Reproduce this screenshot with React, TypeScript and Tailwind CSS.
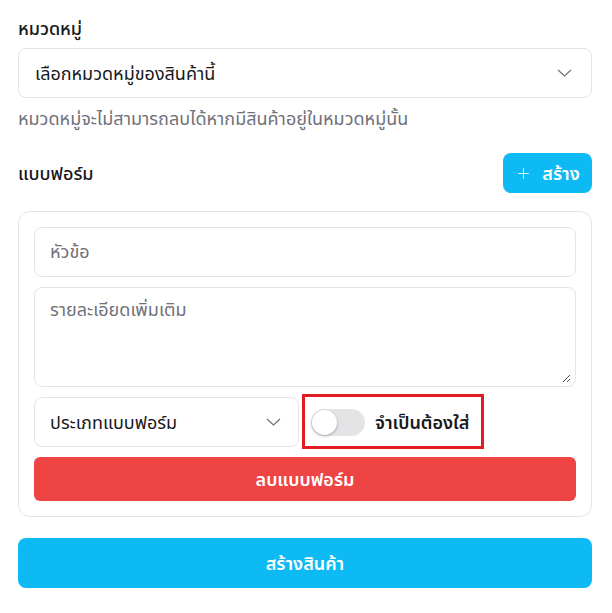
import { Plus } from "lucide-react"

function Chevron() {
  return (
    <svg width="15" height="8" viewBox="0 0 15 8" fill="none">
      <path d="M1 1 L7.5 7 L14 1" stroke="#71717a" strokeWidth="1.2" />
    </svg>
  )
}

export default function App() {
  return (
    <div className="bg-white min-h-screen pl-[18px] pr-[20px] pt-[14px] text-[#18181b]" style={{ fontFamily: '"Noto Sans", "Noto Sans Thai", sans-serif' }}>
      {/* category */}
      <div className="text-[18px] font-medium leading-[28px]">หมวดหมู่</div>
      <div className="mt-[6px] h-[50px] rounded-lg border border-[#e4e4e7] flex items-center justify-between pl-[16px] pr-[19px]">
        <span className="text-[18px]">เลือกหมวดหมู่ของสินค้านี้</span>
        <Chevron />
      </div>
      <div className="mt-[6px] text-[18px] leading-[28px] text-[#71717a]">หมวดหมู่จะไม่สามารถลบได้หากมีสินค้าอยู่ในหมวดหมู่นั้น</div>

      {/* forms */}
      <div className="mt-[21px] flex items-center justify-between">
        <span className="text-[18px] font-medium">แบบฟอร์ม</span>
        <button className="h-[40px] w-[89px] rounded-lg bg-[#0ebaf3] text-white flex items-center justify-center gap-[10px] text-[18px] font-semibold">
          <Plus className="w-[17px] h-[17px]" strokeWidth={1.2} />
          สร้าง
        </button>
      </div>

      <div className="mt-[18px] rounded-xl border border-[#e4e4e7] p-[15px] flex flex-col gap-[10px]">
        <div className="h-[50px] rounded-lg border border-[#e4e4e7] flex items-center px-[15px] pb-[2px] text-[18px] text-[#71717a]">หัวข้อ</div>
        <div className="relative h-[100px] rounded-lg border border-[#e4e4e7] px-[15px] pt-[8px] text-[18px] text-[#71717a]">
          รายละเอียดเพิ่มเติม
          <svg className="absolute right-[4px] bottom-[3px] w-[9px] h-[9px]" viewBox="0 0 9 9">
            <path d="M8 1 L1 8 M8 5 L5 8" stroke="#52525b" strokeWidth="1" />
          </svg>
        </div>
        <div className="grid grid-cols-2 gap-[12px]">
          <div className="h-[50px] rounded-lg border border-[#e4e4e7] flex items-center justify-between pl-[15px] pr-[17px]">
            <span className="text-[18px]">ประเภทแบบฟอร์ม</span>
            <Chevron />
          </div>
          <div className="relative flex items-center">
            {/* highlight box */}
            <div className="absolute left-[-9px] w-[182px] top-[-3px] bottom-[-2px] border-[3px] border-[#e21b23]" />
            <div className="w-[54px] h-[27px] rounded-full bg-[#e4e4e7] flex items-center p-[1px]">
              <div className="w-[25px] h-[25px] rounded-full bg-white shadow-[0_1px_3px_rgba(0,0,0,0.3)]" />
            </div>
            <span className="ml-[10px] text-[18px] font-semibold">จำเป็นต้องใส่</span>
          </div>
        </div>
        <button className="h-[44px] rounded-md bg-[#ef4444] text-white text-[18px] font-semibold">ลบแบบฟอร์ม</button>
      </div>

      <button className="mt-[21px] w-full h-[50px] rounded-lg bg-[#0ebaf3] text-white text-[18px] font-semibold">สร้างสินค้า</button>
    </div>
  )
}
